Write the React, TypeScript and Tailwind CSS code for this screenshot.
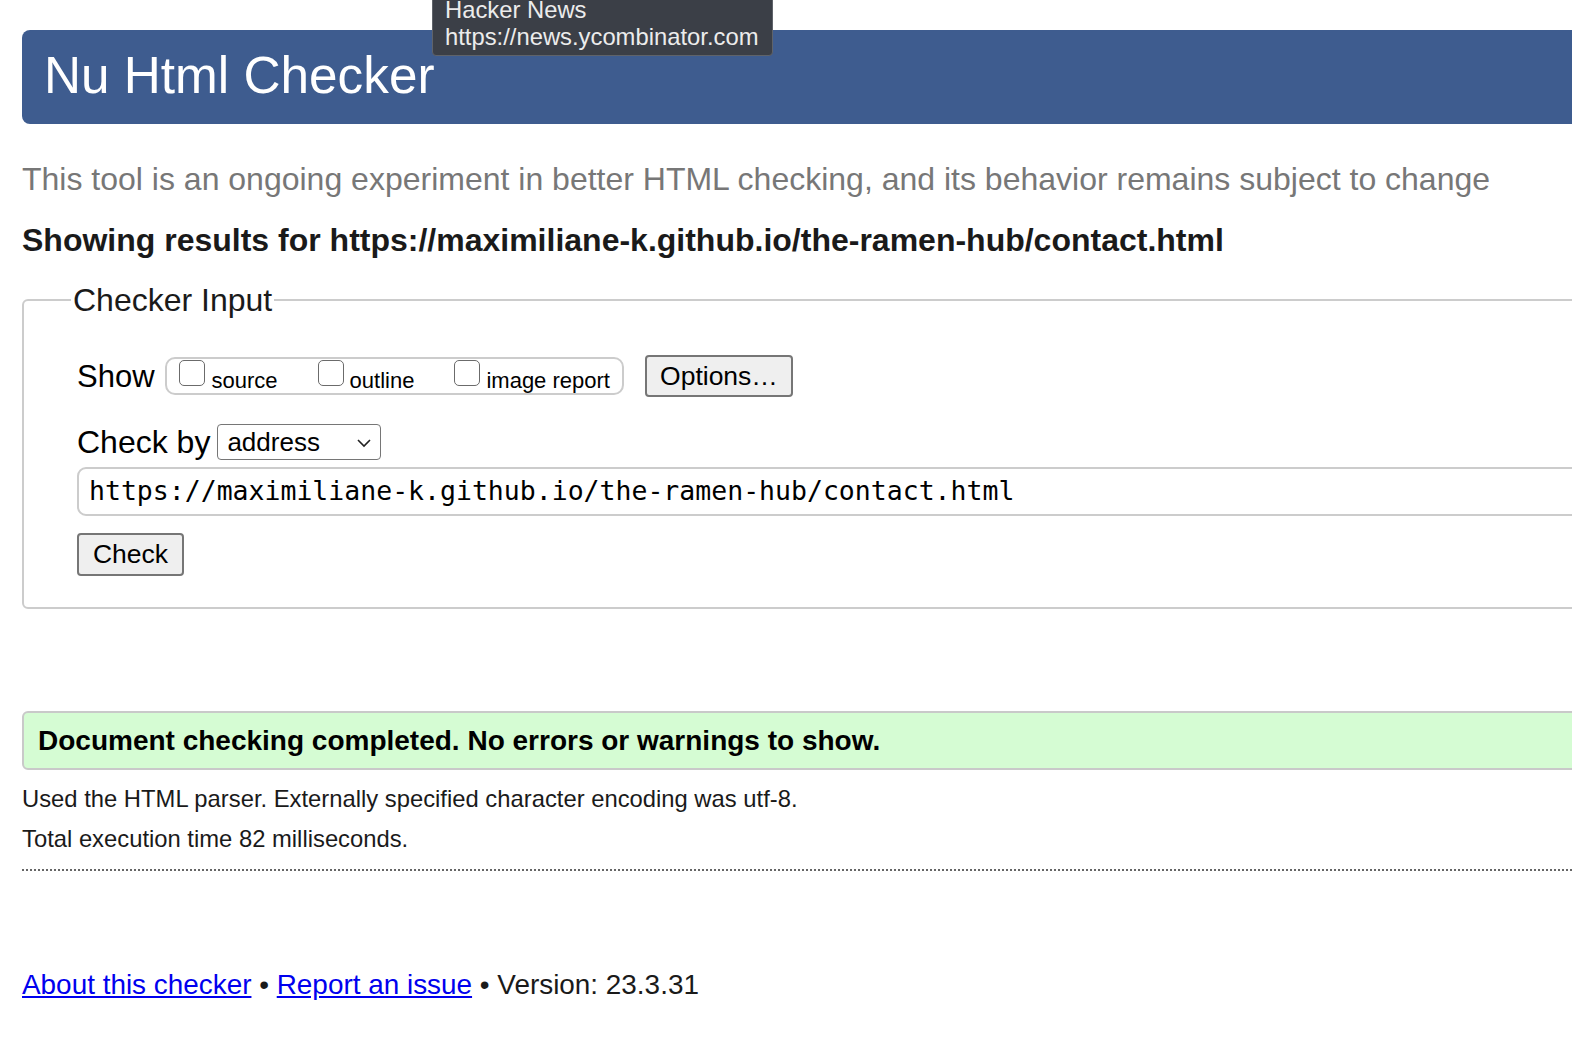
import React from "react";

export default function App() {
  const sans = { fontFamily: '"Liberation Sans", Arial, Helvetica, sans-serif' };
  return (
    <div className="relative w-[1572px] h-[1054px] overflow-hidden bg-white text-black" style={sans}>
      <div className="w-[1800px] pl-[22px] pt-[30px]">
        {/* Header */}
        <div className="h-[94px] bg-[#3e5c8f] rounded-l-[8px] flex items-center pl-[22px]">
          <h1 className="text-[51.3px] leading-none text-white font-normal mt-[-2px]">Nu Html Checker</h1>
        </div>

        <p className="mt-[39px] text-[32px] leading-none text-[#777777]">
          This tool is an ongoing experiment in better HTML checking, and its behavior remains subject to change
        </p>

        <p className="mt-[29px] text-[32px] leading-none font-bold text-[#1a1a1a]">
          Showing results for https://maximiliane-k.github.io/the-ramen-hub/contact.html
        </p>

        {/* Fieldset */}
        <fieldset className="mt-[28px] border-2 border-[#cccccc] rounded-l-[6px] pl-[53px] pb-[31px] pt-0 mx-0">
          <legend className="text-[32px] leading-none px-[2px] ml-[-6px] text-[#1a1a1a]">Checker Input</legend>

          <div className="flex items-center mt-[39px] h-[42px]">
            <span className="text-[31px] leading-none mr-[10px]">Show</span>
            <div className="flex items-center h-[38px] border-2 border-[#cccccc] rounded-[10px] pl-[12px] pr-[12px]">
              <label className="flex items-end mr-[40px]">
                <span className="w-[26px] h-[26px] border-[1.5px] border-[#6b6b6b] rounded-[5px] mb-[6px] bg-white" />
                <span className="text-[22px] leading-none ml-[7px] mt-[10px]">source</span>
              </label>
              <label className="flex items-end mr-[40px]">
                <span className="w-[26px] h-[26px] border-[1.5px] border-[#6b6b6b] rounded-[5px] mb-[6px] bg-white" />
                <span className="text-[22px] leading-none ml-[6px] mt-[10px]">outline</span>
              </label>
              <label className="flex items-end">
                <span className="w-[26px] h-[26px] border-[1.5px] border-[#6b6b6b] rounded-[5px] mb-[6px] bg-white" />
                <span className="text-[22px] leading-none ml-[6px] mt-[10px]">image report</span>
              </label>
            </div>
            <button className="ml-[21px] h-[42px] w-[148px] bg-[#efefef] border-2 border-[#767676] rounded-[4px] text-[26.5px] leading-none text-black">
              Options…
            </button>
          </div>

          <div className="flex items-center mt-[27px] h-[36px]">
            <span className="text-[32px] leading-none mr-[7px]">Check by</span>
            <div className="relative w-[164px] h-[36px] border-[1.5px] border-[#767676] rounded-[4px] flex items-center pl-[9px] bg-white">
              <span className="text-[26px] leading-none">address</span>
              <svg className="absolute right-[8px] top-[12px]" width="16" height="12" viewBox="0 0 16 12">
                <path d="M2 3 L8 9 L14 3" fill="none" stroke="#222" strokeWidth="1.6" />
              </svg>
            </div>
          </div>

          <div className="mt-[7px] h-[49px] border-2 border-[#cccccc] rounded-l-[9px] flex items-center pl-[10px]">
            <span className="text-[26.5px] leading-none text-black" style={{ fontFamily: '"DejaVu Sans Mono", Menlo, monospace' }}>
              https://maximiliane-k.github.io/the-ramen-hub/contact.html
            </span>
          </div>

          <button className="mt-[17px] h-[43px] w-[107px] bg-[#efefef] border-2 border-[#767676] rounded-[4px] text-[26.5px] leading-none text-black">
            Check
          </button>
        </fieldset>

        {/* Success */}
        <div className="mt-[102px] h-[59px] bg-[#d5fcd3] border-2 border-[#c9c9c9] rounded-l-[6px] flex items-center pl-[14px]">
          <span className="text-[28px] leading-none font-bold text-black">Document checking completed. No errors or warnings to show.</span>
        </div>

        <p className="mt-[17px] text-[23.8px] leading-none text-[#1a1a1a]">Used the HTML parser. Externally specified character encoding was utf-8.</p>
        <p className="mt-[16px] text-[23.8px] leading-none text-[#1a1a1a]">Total execution time 82 milliseconds.</p>

        <div className="mt-[18px] border-t-2 border-dotted border-[#666666]" />

        <div className="mt-[100px] text-[27.9px] leading-none text-[#1a1a1a]">
          <a className="text-[#0000ee] underline">About this checker</a>
          {" • "}
          <a className="text-[#0000ee] underline">Report an issue</a>
          {" • Version: 23.3.31"}
        </div>
      </div>

      {/* Tooltip */}
      <div className="absolute left-[432px] top-[-11px] w-[341px] h-[67px] bg-[#3b3f47] border border-[#5f636a] rounded-[4px] px-[12px] pt-[6px] text-[#ececec] text-[23.8px] leading-[27px]">
        <div>Hacker News</div>
        <div>https://news.ycombinator.com</div>
      </div>
    </div>
  );
}
